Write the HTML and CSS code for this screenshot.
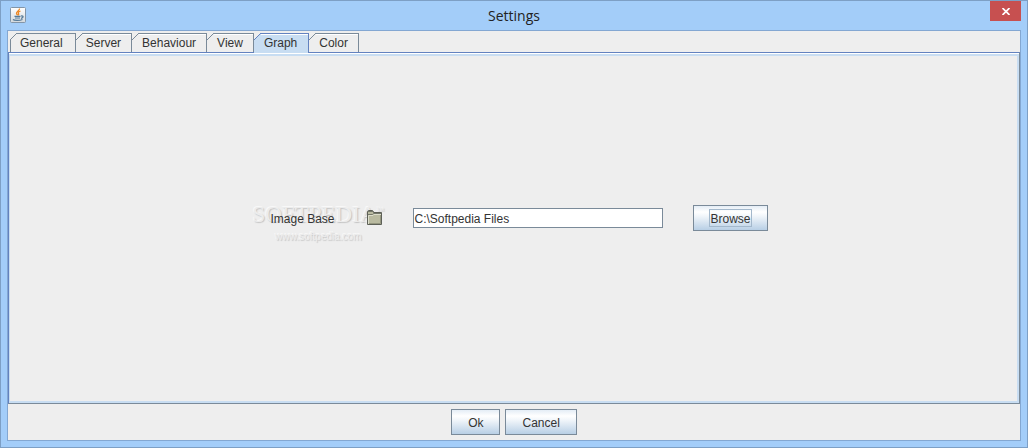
FILE: index.html
```html
<!DOCTYPE html>
<html lang="en">
<head>
    <meta charset="UTF-8">
    <meta name="viewport" content="width=device-width, initial-scale=1.0">
    <title>Settings</title>
    <link rel="stylesheet" href="styles.css">
</head>
<body>
    <div class="window">
        <header class="titlebar">
            <svg class="app-icon" viewBox="0 0 16 16" aria-hidden="true">
                <defs>
                    <linearGradient id="tile" x1="0" y1="0" x2="0" y2="1">
                        <stop offset="0" stop-color="#ffffff"/>
                        <stop offset="1" stop-color="#d3d8dc"/>
                    </linearGradient>
                </defs>
                <rect x="0.5" y="0.5" width="15" height="15" rx="1" fill="url(#tile)" stroke="#8295a8"/>
                <path d="M9.5 1.5C10 3.500 6 4.500 6.500 6.500C6.700 7.500 7.500 7.500 7.800 8.300M10.500 4C8 5 8 5.800 8.600 6.700C9 7.300 8.500 8 8.300 8.300" fill="none" stroke="#ee8722" stroke-width="1.300"/>
                <path d="M4.500 9.300H10.500M5 11H10M11 9C14 8.500 13.500 11 11 11.300M3 12.500C4 13.700 10 13.700 12.500 12.500" fill="none" stroke="#557a98" stroke-width="1.200"/>
            </svg>
            <h1>Settings</h1>
            <button class="close" type="button" aria-label="Close">
                <svg viewBox="0 0 8 7" aria-hidden="true">
                    <path d="M0.500 0L7.500 7M7.500 0L0.500 7" stroke="#fff" stroke-width="1.700"/>
                </svg>
            </button>
        </header>

        <form class="client">
            <div class="tabs" role="tablist">
                <button class="tab" type="button" role="tab">General</button>
                <button class="tab" type="button" role="tab">Server</button>
                <button class="tab" type="button" role="tab">Behaviour</button>
                <button class="tab" type="button" role="tab">View</button>
                <button class="tab active" type="button" role="tab" aria-selected="true">Graph</button>
                <button class="tab" type="button" role="tab">Color</button>
            </div>

            <div class="panel" role="tabpanel">
                <div class="row">
                    <div class="watermark" aria-hidden="true">
                        <span class="mark-name">SOFTPEDIA<sup>™</sup></span>
                        <span class="mark-url">www.softpedia.com</span>
                    </div>
                    <label for="imageBase">Image Base</label>
                    <svg class="folder" viewBox="0 0 16 16" aria-hidden="true">
                        <path d="M0.500 14.500V1.500L1.500 0.500H5.500L6.500 1.500V2.500H14.500V14.500H0.500Z" fill="#b9baa0" stroke="#5d6057"/>
                        <path d="M1 1.500H6M1 4.500H5.500L6.500 3.500H14" fill="none" stroke="#74776a"/>
                        <path d="M1.500 14V5.500H6L7 4.500H14" fill="none" stroke="#dcddcb"/>
                        <path d="M13.500 5V13.500H2" fill="none" stroke="#94967f"/>
                    </svg>
                    <input type="text" id="imageBase" value="C:\Softpedia Files">
                    <button class="btn focused" type="button"><span>Browse</span></button>
                </div>
            </div>

            <div class="actions">
                <button class="btn" type="submit">Ok</button>
                <button class="btn" type="button">Cancel</button>
            </div>
        </form>
    </div>
</body>
</html>
```
FILE: styles.css
```css
* {
    box-sizing: border-box;
}

body {
    margin: 0;
    font-family: "Liberation Sans", Arial, sans-serif;
    font-size: 12px;
    color: #333;
}

button, input {
    font: inherit;
    color: inherit;
    margin: 0;
}

.window {
    display: flex;
    flex-direction: column;
    min-height: 100vh;
    padding: 0 6px 6px;
    background-color: #a3cdf9;
    border: 1px solid #7d9fc5;
}

.titlebar {
    display: grid;
    grid-template-columns: 1fr auto 1fr;
    height: 29px;
}

.app-icon {
    width: 16px;
    height: 16px;
    margin: 6px 0 0 3px;
}

h1 {
    margin: 0;
    font-family: "Open Sans", "Segoe UI", sans-serif;
    font-size: 14px;
    font-weight: normal;
    line-height: 29px;
    color: #222;
}

.close {
    display: flex;
    justify-content: center;
    align-items: center;
    justify-self: end;
    width: 31px;
    height: 20px;
    padding: 0;
    background-color: #c75050;
    border: 0;
}

.close svg {
    width: 8px;
    height: 7px;
}

.client {
    display: flex;
    flex: 1;
    flex-direction: column;
    padding-top: 2px;
    background-color: #eee;
    border: 1px solid #83a7d2;
}

.tabs {
    display: flex;
    padding-left: 2px;
}

/* the lines are backgrounds so the top left corner can be cut off */
.tab {
    --line: #7a8a99;
    height: 19px;
    padding: 1px 10px 0;
    line-height: 18px;
    border: 0;
    border-right: 1px solid var(--line);
    background:
        linear-gradient(135deg, #eee 45%, var(--line) 45%, var(--line) 55%, transparent 55%) 0 0 / 7px 7px no-repeat,
        linear-gradient(var(--line), var(--line)) 6px 0 / 100% 1px no-repeat,
        linear-gradient(#fff, #fff) 7px 1px / 100% 1px no-repeat,
        #eee;
}

.tab:first-child {
    padding-right: 12px;
    background:
        linear-gradient(135deg, #eee 45%, var(--line) 45%, var(--line) 55%, transparent 55%) 0 0 / 7px 7px no-repeat,
        linear-gradient(var(--line), var(--line)) 6px 0 / 100% 1px no-repeat,
        linear-gradient(var(--line), var(--line)) 0 6px / 1px 100% no-repeat,
        #eee;
}

.tab.active {
    --line: #6382bf;
    z-index: 1;
    height: 20px;
    margin-bottom: -1px;
    padding: 0 11px 1px 10px;
    background-color: #c8ddf2;
}

.panel {
    display: flex;
    flex: 1;
    justify-content: center;
    align-items: center;
    padding: 0 0 20px 10px;
    border: 1px solid #7a8a99;
    border-top-color: #6382bf;
    border-left-color: #6382bf;
    box-shadow: inset 0 1px #fff, inset 0 3px #c8ddf2, inset 1px 0 #c8ddf2, inset -2px -2px #c8ddf2;
}

.row {
    position: relative;
    display: flex;
    align-items: center;
    gap: 30px;
}

.row label {
    position: relative;
    min-width: 67px;
    padding-top: 1px;
}

.folder {
    position: relative;
    width: 16px;
    height: 16px;
}

.row input {
    width: 250px;
    height: 20px;
    padding: 1px 0 0;
    border: 1px solid #7a8a99;
    background-color: #fff;
}

.btn {
    height: 26px;
    padding: 1px 16px 0;
    border: 1px solid #7a8a99;
    background: linear-gradient(#e4edf6, #fff 25%, #f3f7fb 40%, #b8cfe5);
}

.btn.focused {
    padding: 0 15px;
}

.focused span {
    display: inline-block;
    padding-top: 2px;
    line-height: 14px;
    border: 1px solid #a3b8cc;
}

.actions {
    display: flex;
    justify-content: center;
    gap: 5px;
    padding: 5px;
}

.watermark {
    position: absolute;
    top: -4px;
    left: -18px;
    display: flex;
    flex-direction: column;
    align-items: center;
    color: #ececec;
    text-shadow: 1px 1px 1px #c4c4c4, -1px -1px #f8f8f8;
    white-space: nowrap;
}

.mark-name {
    font-family: "Liberation Serif", "Times New Roman", serif;
    font-size: 23px;
    line-height: 27px;
}

.mark-name sup {
    font-size: 8px;
    line-height: 8px;
}

.mark-url {
    font-size: 10px;
    line-height: 18px;
}
```
